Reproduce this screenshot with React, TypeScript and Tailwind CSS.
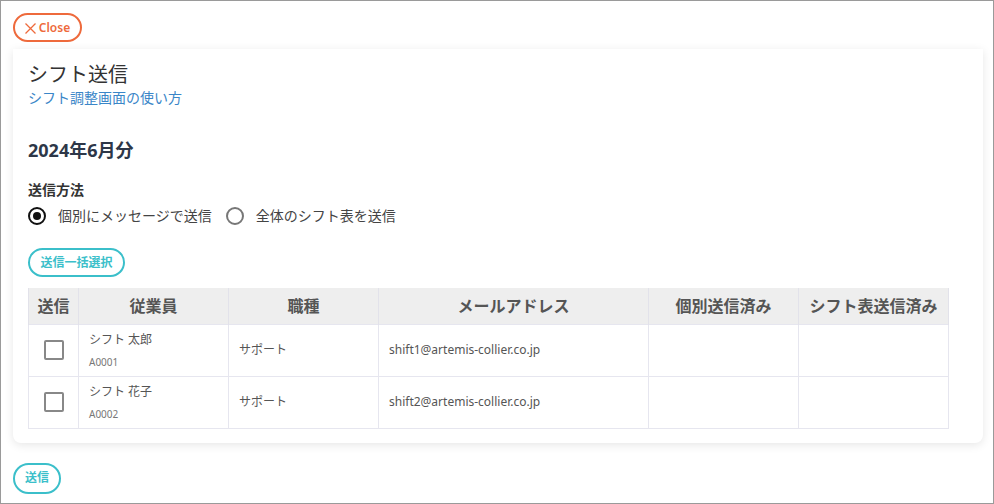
const rows = [
  { name: 'シフト 太郎', code: 'A0001', job: 'サポート', mail: 'shift1@artemis-collier.co.jp' },
  { name: 'シフト 花子', code: 'A0002', job: 'サポート', mail: 'shift2@artemis-collier.co.jp' },
]

export default function App() {
  return (
    <div
      className="h-[504px] w-[994px] overflow-hidden border border-[#9a9a9a] bg-white text-[#333]"
      style={{ fontFamily: '"Noto Sans", "Noto Sans CJK JP", sans-serif' }}
    >
      <div className="px-3 pt-3">
        <button className="flex h-[29px] w-[69px] items-center justify-center gap-[3px] rounded-full border-2 border-[#ee6a3c] pt-[1px] text-[12px] font-semibold text-[#ee6a3c]">
          <svg width="11" height="11" viewBox="0 0 11 11" fill="none" stroke="currentColor" strokeWidth="1.3">
            <path d="M0.5 0.5L10.5 10.5M10.5 0.5L0.5 10.5" />
          </svg>
          Close
        </button>

        {/* card */}
        <div className="mt-[7px] w-[970px] rounded-b-lg bg-white px-[15px] pb-[14px] pt-[12px] shadow-[0_2px_10px_rgba(0,0,0,0.1)]">
          <h1 className="text-[20px] leading-[28px] text-[#333]">シフト送信</h1>
          <a className="block text-[14px] leading-[18px] text-[#3a86c8]">シフト調整画面の使い方</a>

          <h2 className="mt-[31px] text-[18px] font-bold leading-[24px] text-[#2d3748]">2024年6月分</h2>

          <div className="mt-[18px] text-[14px] font-bold leading-[20px] text-[#333]">送信方法</div>
          <div className="mt-[6px] flex items-center text-[14px] leading-[20px] text-[#444]">
            <span className="flex h-[18px] w-[18px] items-center justify-center rounded-full border-2 border-[#111]">
              <span className="h-[8px] w-[8px] rounded-full bg-[#111]" />
            </span>
            <span className="ml-[12px]">個別にメッセージで送信</span>
            <span className="ml-[14px] h-[18px] w-[18px] rounded-full border-2 border-[#777]" />
            <span className="ml-[12px]">全体のシフト表を送信</span>
          </div>

          <button className="mt-[22px] flex h-[29px] w-[97px] items-center justify-center rounded-full border-2 border-[#3bbfca] text-[12px] font-bold text-[#3bbfca]">
            送信一括選択
          </button>

          <table className="mt-[11px] w-[920px] table-fixed border-collapse">
            <colgroup>
              <col className="w-[50px]" />
              <col className="w-[150px]" />
              <col className="w-[150px]" />
              <col className="w-[270px]" />
              <col className="w-[150px]" />
              <col className="w-[150px]" />
            </colgroup>
            <thead>
              <tr className="h-[36px] bg-[#eeeeee] text-[16px] font-bold text-[#555]">
                {['送信', '従業員', '職種', 'メールアドレス', '個別送信済み', 'シフト表送信済み'].map((h) => (
                  <th key={h} className="border-x border-[#e2e2ea] text-center font-bold">
                    {h}
                  </th>
                ))}
              </tr>
            </thead>
            <tbody>
              {rows.map((r) => (
                <tr key={r.code} className="h-[52px] text-[12px] text-[#555]">
                  <td className="border border-[#e6e6ef] text-center">
                    <span className="inline-block h-[20px] w-[20px] rounded-[2px] border-2 border-[#888] align-middle" />
                  </td>
                  <td className="border border-[#e6e6ef] px-[10px]">
                    <div className="leading-[18px]">{r.name}</div>
                    <div className="mt-[6px] text-[10px] leading-[14px] text-[#777]">{r.code}</div>
                  </td>
                  <td className="border border-[#e6e6ef] px-[10px]">{r.job}</td>
                  <td className="border border-[#e6e6ef] px-[10px]">{r.mail}</td>
                  <td className="border border-[#e6e6ef]" />
                  <td className="border border-[#e6e6ef]" />
                </tr>
              ))}
            </tbody>
          </table>
        </div>

        <button className="mt-[20px] flex h-[31px] w-[48px] items-center justify-center rounded-full border-2 border-[#3bbfca] text-[12px] font-bold text-[#3bbfca]">
          送信
        </button>
      </div>
    </div>
  )
}
